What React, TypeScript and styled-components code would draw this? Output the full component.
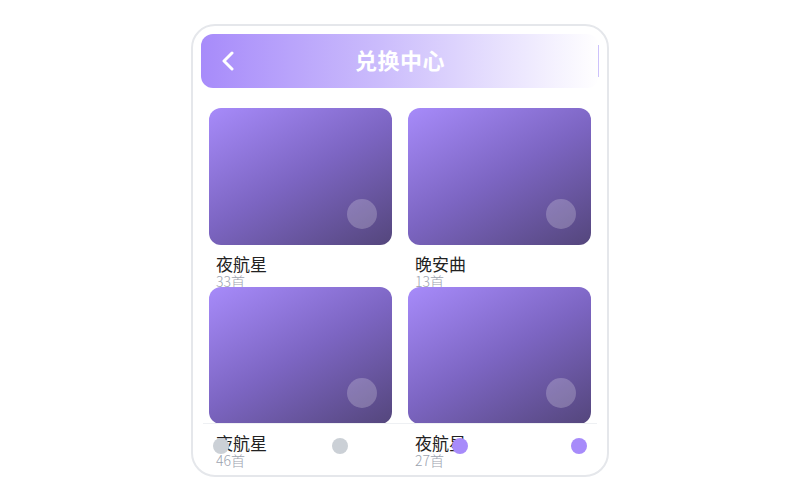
import styled, { createGlobalStyle } from 'styled-components';

const GlobalStyle = createGlobalStyle`
  html, body {
    margin: 0;
    padding: 0;
    background: #ffffff;
    font-family: "Noto Sans CJK SC", "Noto Sans", sans-serif;
  }
  #root {
    height: 500px;
    display: flex;
    align-items: center;
    justify-content: center;
  }
`;

const Phone = styled.div`
  position: relative;
  width: 418px;
  height: 453px;
  box-sizing: border-box;
  border: 2px solid #e5e7eb;
  border-radius: 24px;
  background: #ffffff;
  overflow: hidden;
  padding: 8px;
  display: flex;
  flex-direction: column;
`;

const Header = styled.div`
  position: relative;
  height: 54px;
  flex-shrink: 0;
  border-radius: 12px;
  background: linear-gradient(90deg, #a78bfa 0%, #cbbcfc 45%, #ffffff 100%);
  display: flex;
  align-items: center;
  justify-content: center;

  &::after {
    content: '';
    position: absolute;
    right: 0;
    top: 11px;
    bottom: 11px;
    width: 1px;
    background: #cdc2fb;
  }
`;

const BackButton = styled.button`
  position: absolute;
  left: 16px;
  top: 50%;
  transform: translateY(-50%);
  border: none;
  background: none;
  padding: 0;
  width: 22px;
  height: 24px;
  display: flex;
  align-items: center;
  justify-content: center;
  cursor: pointer;
`;

const Title = styled.h1`
  margin: -3px 0 0;
  font-size: 22px;
  line-height: 30px;
  font-weight: 700;
  color: #ffffff;
  letter-spacing: 0.5px;
`;

const Grid = styled.div`
  display: grid;
  grid-template-columns: 1fr 1fr;
  column-gap: 16px;
  grid-auto-rows: 179px;
  padding: 20px 8px 0;
`;

const Item = styled.div`
  display: flex;
  flex-direction: column;
`;

const Cover = styled.div`
  position: relative;
  flex-shrink: 0;
  height: 137px;
  border-radius: 12px;
  background: linear-gradient(150deg, #a78bfa 0%, #7c65c2 50%, #54467c 100%);
`;

const PlayDot = styled.span`
  position: absolute;
  right: 15px;
  bottom: 16px;
  width: 30px;
  height: 30px;
  border-radius: 50%;
  background: rgba(255, 255, 255, 0.22);
`;

const Name = styled.div`
  margin: 8px 0 0 7px;
  font-size: 17px;
  line-height: 22px;
  color: #222222;
  white-space: nowrap;
`;

const Count = styled.div`
  margin: -2px 0 0 7px;
  font-size: 14px;
  line-height: 16px;
  font-weight: 300;
  color: #9ca3af;
  white-space: nowrap;
`;

const TabBar = styled.div`
  position: absolute;
  left: 10px;
  right: 10px;
  bottom: 7px;
  height: 44px;
  border-top: 1px solid #eef0f3;
  display: flex;
  align-items: center;
  justify-content: space-between;
  padding: 0 10px;
`;

const TabDot = styled.span<{ active?: boolean }>`
  width: 16px;
  height: 16px;
  border-radius: 50%;
  background: ${props => (props.active ? '#a78bfa' : '#cbd0d6')};
`;

const albums = [
  { name: '夜航星', count: 33 },
  { name: '晚安曲', count: 13 },
  { name: '夜航星', count: 46 },
  { name: '夜航星', count: 27 },
];

export default function App() {
  return (
    <>
      <GlobalStyle />
      <Phone>
        <Header>
          <BackButton aria-label="返回">
            <svg width="14" height="20" viewBox="0 0 14 20" fill="none">
              <path d="M11 2 L3 10 L11 18" stroke="#ffffff" strokeWidth="3" strokeLinecap="round" strokeLinejoin="round" />
            </svg>
          </BackButton>
          <Title>兑换中心</Title>
        </Header>

        <Grid>
          {albums.map((album, index) => (
            <Item key={index}>
              <Cover>
                <PlayDot />
              </Cover>
              <Name>{album.name}</Name>
              <Count>{album.count}首</Count>
            </Item>
          ))}
        </Grid>

        <TabBar>
          <TabDot />
          <TabDot />
          <TabDot active />
          <TabDot active />
        </TabBar>
      </Phone>
    </>
  );
}
